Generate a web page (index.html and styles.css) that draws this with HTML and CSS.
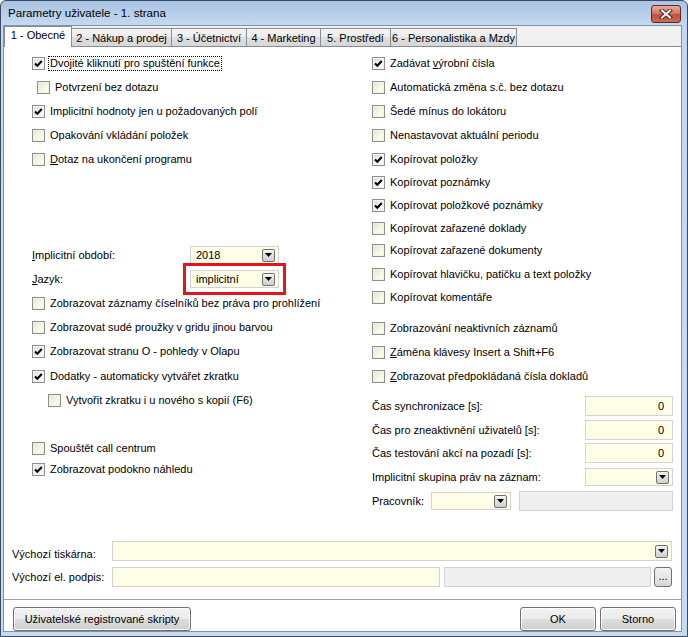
FILE: index.html
```html
<!DOCTYPE html>
<html lang="cs">
<head>
<meta charset="utf-8">
<title>Parametry uživatele - 1. strana</title>
<link rel="stylesheet" href="styles.css">
</head>
<body>
<div class="win">
  <div class="titlebar">
    <span class="title">Parametry uživatele - 1. strana</span>
    <div class="close">
      <svg width="14" height="10" viewBox="0 0 14 10"><path d="M3 1.5 L11 8.5 M11 1.5 L3 8.5" stroke="#4a2a24" stroke-width="4" stroke-linecap="square"/><path d="M3 1.5 L11 8.5 M11 1.5 L3 8.5" stroke="#fff" stroke-width="2" stroke-linecap="square"/></svg>
    </div>
  </div>
  <div class="client">
    <div class="tabs">
      <div class="tab active t1">1 - Obecné</div>
      <div class="tab t2">2 - Nákup a prodej</div>
      <div class="tab t3">3 - Účetnictví</div>
      <div class="tab t4">4 - Marketing</div>
      <div class="tab t5">5. Prostředí</div>
      <div class="tab t6">6 - Personalistika a Mzdy</div>
    </div>
    <div class="panel">
      <div class="cols">
        <div class="col left">
          <div class="row h24"><span class="cb on"><svg viewBox="0 0 11 11"><polyline points="2,5.5 4.3,7.8 8.8,3" fill="none" stroke="#000" stroke-width="2"/></svg></span><span class="lbl focus">Dvojité kliknutí pro spuštění funkce</span></div>
          <div class="row h24 ind1"><span class="cb"></span><span class="lbl">Potvrzení bez dotazu</span></div>
          <div class="row h24"><span class="cb on"><svg viewBox="0 0 11 11"><polyline points="2,5.5 4.3,7.8 8.8,3" fill="none" stroke="#000" stroke-width="2"/></svg></span><span class="lbl">Implicitní hodnoty jen u požadovaných polí</span></div>
          <div class="row h24"><span class="cb"></span><span class="lbl">Opakování vkládání položek</span></div>
          <div class="row h24"><span class="cb"></span><span class="lbl"><u>D</u>otaz na ukončení programu</span></div>
          <div class="spacer s72"></div>
          <div class="row h24">
            <span class="flabel"><u>I</u>mplicitní období:</span>
            <div class="combo c89"><span class="val">2018</span><span class="dd"><svg viewBox="0 0 7 4"><path d="M0 0 H7 L3.5 4 Z" fill="#000"/></svg></span></div>
          </div>
          <div class="row h24">
            <span class="flabel"><u>J</u>azyk:</span>
            <div class="combo c89 marked"><span class="val">implicitní</span><span class="dd"><svg viewBox="0 0 7 4"><path d="M0 0 H7 L3.5 4 Z" fill="#000"/></svg></span></div>
          </div>
          <div class="row h24"><span class="cb"></span><span class="lbl">Zobrazovat záznamy číselníků bez práva pro prohlížení</span></div>
          <div class="row h24"><span class="cb"></span><span class="lbl">Zobrazovat sudé proužky v gridu jinou barvou</span></div>
          <div class="row h25"><span class="cb on"><svg viewBox="0 0 11 11"><polyline points="2,5.5 4.3,7.8 8.8,3" fill="none" stroke="#000" stroke-width="2"/></svg></span><span class="lbl">Zobrazovat stranu O - pohledy v Olapu</span></div>
          <div class="row h24"><span class="cb on"><svg viewBox="0 0 11 11"><polyline points="2,5.5 4.3,7.8 8.8,3" fill="none" stroke="#000" stroke-width="2"/></svg></span><span class="lbl">Dodatky - automaticky vytvářet zkratku</span></div>
          <div class="row h24 ind2"><span class="cb"></span><span class="lbl">Vytvořit zkratku i u nového s kopií (F6)</span></div>
          <div class="spacer s24"></div>
          <div class="row h24"><span class="cb"></span><span class="lbl">Spouštět call centrum</span></div>
          <div class="row h18"><span class="cb on"><svg viewBox="0 0 11 11"><polyline points="2,5.5 4.3,7.8 8.8,3" fill="none" stroke="#000" stroke-width="2"/></svg></span><span class="lbl">Zobrazovat podokno náhledu</span></div>
        </div>
        <div class="col right">
          <div class="row h24"><span class="cb on"><svg viewBox="0 0 11 11"><polyline points="2,5.5 4.3,7.8 8.8,3" fill="none" stroke="#000" stroke-width="2"/></svg></span><span class="lbl">Zadávat <u>v</u>ýrobní čísla</span></div>
          <div class="row h24"><span class="cb"></span><span class="lbl">Automatická změna s.č. bez dotazu</span></div>
          <div class="row h24"><span class="cb"></span><span class="lbl">Šedé mínus do lokátoru</span></div>
          <div class="row h25"><span class="cb"></span><span class="lbl">Nenastavovat aktuální periodu</span></div>
          <div class="row h23"><span class="cb on"><svg viewBox="0 0 11 11"><polyline points="2,5.5 4.3,7.8 8.8,3" fill="none" stroke="#000" stroke-width="2"/></svg></span><span class="lbl">Kopírovat položky</span></div>
          <div class="row h22"><span class="cb on"><svg viewBox="0 0 11 11"><polyline points="2,5.5 4.3,7.8 8.8,3" fill="none" stroke="#000" stroke-width="2"/></svg></span><span class="lbl">Kopírovat poznámky</span></div>
          <div class="row h24"><span class="cb on"><svg viewBox="0 0 11 11"><polyline points="2,5.5 4.3,7.8 8.8,3" fill="none" stroke="#000" stroke-width="2"/></svg></span><span class="lbl">Kopírovat položkové poznámky</span></div>
          <div class="row h22"><span class="cb"></span><span class="lbl">Kopírovat zařazené doklady</span></div>
          <div class="row h23"><span class="cb"></span><span class="lbl">Kopírovat zařazené dokumenty</span></div>
          <div class="row h24"><span class="cb"></span><span class="lbl">Kopírovat hlavičku, patičku a text položky</span></div>
          <div class="row h22"><span class="cb"></span><span class="lbl">Kopírovat komentáře</span></div>
          <div class="spacer s8"></div>
          <div class="row h24"><span class="cb"></span><span class="lbl">Zobrazování neaktivních záznamů</span></div>
          <div class="row h24"><span class="cb"></span><span class="lbl"><u>Z</u>áměna klávesy Insert a Shift+F6</span></div>
          <div class="row h24"><span class="cb"></span><span class="lbl"><u>Z</u>obrazovat předpokládaná čísla dokladů</span></div>
          <div class="spacer s6"></div>
          <div class="row h24 field"><span class="flabel grow">Čas synchronizace [s]:</span><div class="num">0</div></div>
          <div class="row h23 field"><span class="flabel grow">Čas pro zneaktivnění uživatelů [s]:</span><div class="num">0</div></div>
          <div class="row h24 field"><span class="flabel grow">Čas testování akcí na pozadí [s]:</span><div class="num">0</div></div>
          <div class="row h24 field"><span class="flabel grow">Implicitní skupina práv na záznam:</span>
            <div class="combo c88"><span class="val"></span><span class="dd"><svg viewBox="0 0 7 4"><path d="M0 0 H7 L3.5 4 Z" fill="#000"/></svg></span></div>
          </div>
          <div class="row h24 field"><span class="flabel pl">Pracovník:</span>
            <div class="combo c80"><span class="val"></span><span class="dd"><svg viewBox="0 0 7 4"><path d="M0 0 H7 L3.5 4 Z" fill="#000"/></svg></span></div>
            <div class="gray grow"></div>
          </div>
        </div>
      </div>
      <div class="bottom">
        <div class="brow end">
          <span class="blabel">Výchozí tiskárna:</span>
          <div class="combo grow tall"><span class="val"></span><span class="dd"><svg viewBox="0 0 7 4"><path d="M0 0 H7 L3.5 4 Z" fill="#000"/></svg></span></div>
        </div>
        <div class="brow">
          <span class="blabel">Výchozí el. podpis:</span>
          <div class="yfield"></div>
          <div class="gray grow tall"></div>
          <div class="dots">...</div>
        </div>
      </div>
    </div>
    <div class="buttons">
      <div class="btn wide">Uživatelské registrované skripty</div>
      <div class="grow"></div>
      <div class="btn">OK</div>
      <div class="btn">Storno</div>
    </div>
  </div>
</div>
</body>
</html>
```

FILE: styles.css
```css
* { box-sizing: border-box; }
body {
  margin: 0;
  font-family: "Liberation Sans", Arial, sans-serif;
  font-size: 11px;
  color: #000;
  background: #fff;
}
.win {
  width: 688px;
  height: 637px;
  display: flex;
  flex-direction: column;
  border: 1px solid #3a4c63;
  border-radius: 6px 6px 0 0;
  background: linear-gradient(#a9c3e2, #c3d8ef 22px, #c7dbf0);
  padding: 0 5px 4px 2px;
}
.titlebar {
  height: 24px;
  display: flex;
  justify-content: space-between;
  padding-left: 5px;
}
.title {
  font-size: 11.6px;
  line-height: 24px;
  color: #000;
}
.close {
  width: 30px;
  height: 18px;
  margin-top: 4px;
  margin-right: 1px;
  border: 1px solid #5a2a20;
  border-radius: 3px;
  background: linear-gradient(#e9a99b, #d47a68 45%, #c2503b 55%, #cf6a4e);
  display: flex;
  align-items: center;
  justify-content: center;
}
.close svg { display: block; }
.client {
  flex: 1;
  border: 1px solid #7f93ad;
  background: #fff;
  display: flex;
  flex-direction: column;
}
.tabs {
  height: 21px;
  background: #f0f0f0;
  border-bottom: 1px solid #898c95;
  display: flex;
  align-items: flex-end;
}
.tab {
  height: 18px;
  border: 1px solid #898c95;
  border-bottom: none;
  background: linear-gradient(#f4f4f4, #ececec 50%, #e0e0e0 50%, #d6d6d6);
  margin-left: -1px;
  text-align: center;
  line-height: 17px;
  padding-top: 1px;
  white-space: nowrap;
}
.tab.active {
  height: 21px;
  margin-bottom: -1px;
  margin-left: 0;
  background: #fff;
  position: relative;
  z-index: 1;
  line-height: 17px;
  padding-top: 0;
}
.t1 { width: 68px; }
.t2 { width: 101px; }
.t3 { width: 76px; }
.t4 { width: 75px; }
.t5 { width: 71px; }
.t6 { width: 127px; }
.panel {
  flex: 1;
  display: flex;
  flex-direction: column;
  border-bottom: 1px solid #a0a0a0;
}
.cols {
  display: flex;
  padding: 4px 0 0 28px;
}
.col { display: flex; flex-direction: column; }
.left { width: 340px; }
.right { width: 301px; }
.row {
  display: flex;
  align-items: center;
  gap: 5px;
}
.h18 { height: 18px; }
.h22 { height: 22px; }
.h23 { height: 23px; }
.h24 { height: 24px; }
.h25 { height: 25px; }
.s6 { height: 6px; }
.s8 { height: 8px; }
.s24 { height: 24px; }
.s72 { height: 72px; }
.ind1 { padding-left: 5px; }
.ind2 { padding-left: 16px; }
.cb {
  width: 13px;
  height: 13px;
  flex: none;
  border: 1px solid #8e8f8f;
  background: linear-gradient(135deg, #e4e4cc, #fbfbea 70%);
  box-shadow: inset 0 0 0 1px #f2f2e0;
  display: flex;
}
.cb.on {
  background: linear-gradient(135deg, #dcdcdc, #f8f8f8 70%);
  box-shadow: inset 0 0 0 1px #f4f4f4;
}
.cb svg { width: 11px; height: 11px; display: block; }
.lbl { white-space: nowrap; line-height: 13px; }
.focus {
  outline: 1px dotted #000;
  outline-offset: 0;
  padding: 0 1px;
  margin-left: -1px;
}
.flabel { width: 153px; white-space: nowrap; flex: none; }
.flabel.grow { flex: 1; width: auto; }
.flabel.pl { width: 59px; }
.field { gap: 0; }
.combo {
  height: 18px;
  border: 1px solid #d3d3d3;
  background: #fefee6;
  display: flex;
  align-items: center;
  flex: none;
}
.combo.grow { flex: 1; }
.combo.tall { height: 20px; }
.c89 { width: 89px; }
.c88 { width: 88px; }
.c80 { width: 80px; }
.combo .val { flex: 1; padding-left: 5px; line-height: 14px; }
.dd {
  width: 13px;
  height: 13px;
  margin-right: 3px;
  border: 1px solid #707070;
  border-radius: 2px;
  background: linear-gradient(#f6f6f6, #e0e0e0 50%, #d0d0d0);
  display: flex;
  align-items: center;
  justify-content: center;
  flex: none;
}
.dd svg { width: 7px; height: 4px; display: block; }
.marked {
  outline: 3px solid #e3161e;
  outline-offset: 4px;
}
.num {
  width: 88px;
  height: 20px;
  border: 1px solid #d3d3d3;
  background: #fefee6;
  text-align: right;
  padding-right: 8px;
  line-height: 18px;
  flex: none;
}
.gray {
  height: 20px;
  border: 1px solid #d3d3d3;
  background: #efefef;
  margin-left: 8px;
}
.grow { flex: 1; }
.bottom {
  margin-top: auto;
  padding: 0 9px 12px 8px;
  display: flex;
  flex-direction: column;
  gap: 6px;
}
.brow {
  display: flex;
  align-items: center;
  height: 20px;
}
.brow.end { align-items: flex-end; }
.blabel { width: 100px; flex: none; line-height: 13px; white-space: nowrap; }
.yfield {
  width: 328px;
  height: 20px;
  border: 1px solid #d3d3d3;
  background: #fefee6;
  flex: none;
}
.brow .gray { margin-left: 4px; }
.dots {
  width: 18px;
  height: 20px;
  margin-left: 3px;
  border: 1px solid #707070;
  border-radius: 3px;
  background: linear-gradient(#f4f4f4, #e6e6e6 50%, #d6d6d6);
  text-align: center;
  line-height: 16px;
  flex: none;
}
.buttons {
  display: flex;
  padding: 7px 5px 0 9px;
  gap: 4px;
}
.btn {
  width: 76px;
  height: 24px;
  border: 1px solid #707070;
  border-radius: 3px;
  background: linear-gradient(#f2f2f2, #ebebeb 50%, #dddddd 50%, #cfcfcf);
  box-shadow: inset 0 0 0 1px #fcfcfc;
  text-align: center;
  line-height: 22px;
  white-space: nowrap;
}
.btn.wide { width: 178px; }
```
